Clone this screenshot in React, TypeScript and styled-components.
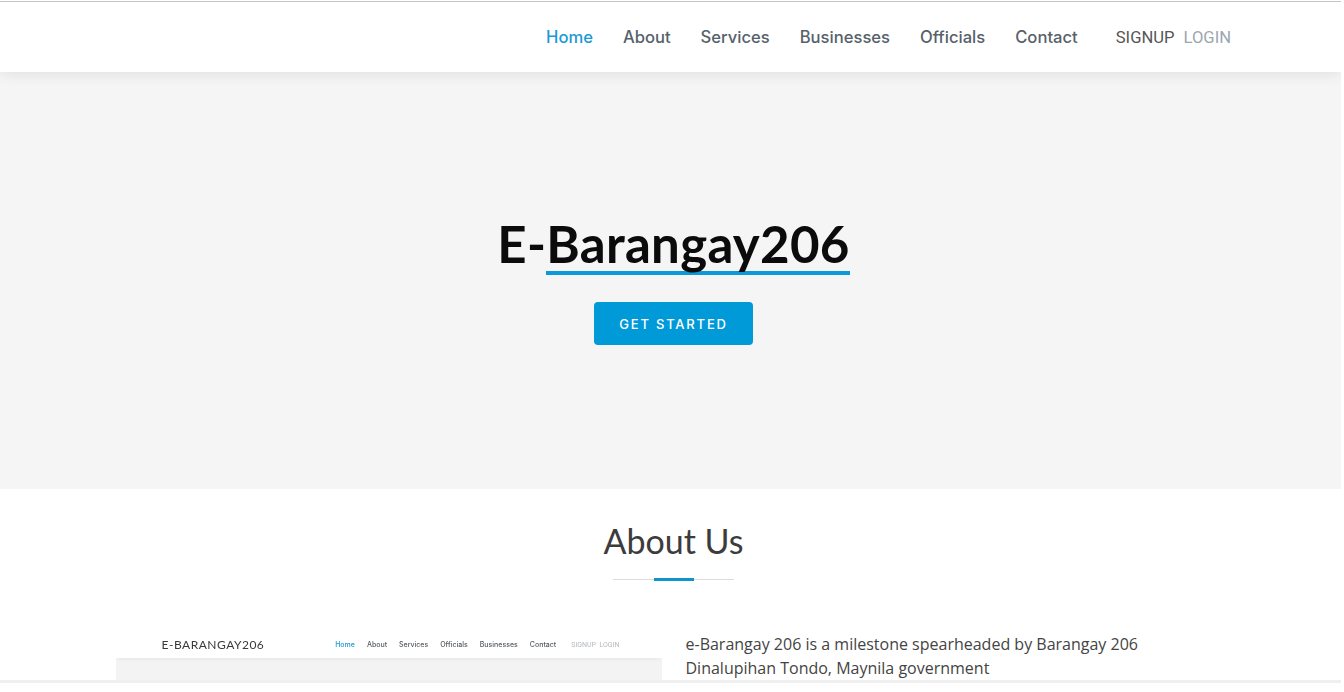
import styled, { createGlobalStyle } from 'styled-components';

const GlobalStyle = createGlobalStyle`
  html, body {
    margin: 0;
    padding: 0;
    background: #ffffff;
  }

  * {
    box-sizing: border-box;
  }
`;

const navItems = ['Home', 'About', 'Services', 'Businesses', 'Officials', 'Contact'];
const miniNavItems = ['Home', 'About', 'Services', 'Officials', 'Businesses', 'Contact'];

const Header = () => {
  return <HeaderBar>
    <Nav>
      {navItems.map((item, idx) => <NavLink key={item} $active={idx === 0}>{item}</NavLink>)}
    </Nav>
    <Auth>
      <AuthLink>SIGNUP</AuthLink>
      <AuthLink $muted>LOGIN</AuthLink>
    </Auth>
  </HeaderBar>;
};

const SitePreview = () => {
  return <Preview>
    <PreviewHead>
      <PreviewBrand>E-BARANGAY206</PreviewBrand>
      <PreviewNav>
        {miniNavItems.map((item, idx) => <PreviewLink key={item} $active={idx === 0}>{item}</PreviewLink>)}
        <PreviewAuth>SIGNUP&nbsp; LOGIN</PreviewAuth>
      </PreviewNav>
    </PreviewHead>
    <PreviewHero />
  </Preview>;
};

export default function App() {
  return <>
    <GlobalStyle />
    <Frame>
      <Viewport>
        <Header />
        <Hero>
          <Title>E-<Underlined>Barangay206</Underlined></Title>
          <StartButton>GET STARTED</StartButton>
        </Hero>
        <About>
          <SectionTitle>About Us</SectionTitle>
          <Divider>
            <DividerAccent />
          </Divider>
          <AboutRow>
            <SitePreview />
            <AboutText>
              e-Barangay 206 is a milestone spearheaded by Barangay 206 Dinalupihan Tondo, Maynila government
            </AboutText>
          </AboutRow>
        </About>
      </Viewport>
      <BottomEdge />
    </Frame>
  </>;
}

const Frame = styled.div`
  width: 1341px;
  margin-top: 1px;
  border-top: 1px solid #c4c4c4;
`;

const Viewport = styled.div`
  height: 678px;
  overflow: hidden;
`;

const BottomEdge = styled.div`
  height: 3px;
  background: #efefef;
`;

const HeaderBar = styled.header`
  position: relative;
  z-index: 2;
  height: 70px;
  padding-right: 110px;

  display: flex;
  align-items: center;
  justify-content: flex-end;

  background: #ffffff;
  box-shadow: 0 2px 14px rgba(0, 0, 0, 0.09);
`;

const Nav = styled.nav`
  display: flex;
  gap: 30px;
  margin-right: 38px;
`;

const NavLink = styled.a<{ $active?: boolean }>`
  font-family: Inter, "Noto Sans", sans-serif;
  font-size: 16.6px;
  font-weight: 500;
  color: ${p => p.$active ? '#1a9ad6' : '#56616a'};
  text-decoration: none;
`;

const Auth = styled.div`
  display: flex;
  gap: 9px;
`;

const AuthLink = styled.a<{ $muted?: boolean }>`
  font-family: Roboto, "Liberation Sans", sans-serif;
  font-size: 16.6px;
  color: ${p => p.$muted ? '#9ba6af' : '#565656'};
`;

const Hero = styled.section`
  height: 417px;
  padding-top: 145px;
  padding-left: 6px;

  display: flex;
  flex-direction: column;
  align-items: center;

  background: #f5f5f5;
`;

const Title = styled.h1`
  margin: 0;

  font-family: Lato, "Open Sans", sans-serif;
  font-size: 51px;
  font-weight: 700;
  line-height: 54px;
  letter-spacing: 0.3px;
  color: #0b0b0b;
`;

const Underlined = styled.span`
  display: inline-block;
  border-bottom: 4px solid #0d99d9;
`;

const StartButton = styled.button`
  margin-top: 27px;
  width: 159px;
  height: 43px;

  border: none;
  border-radius: 4px;
  background: #009ad9;

  font-family: Inter, "Open Sans", sans-serif;
  font-size: 13px;
  font-weight: 500;
  letter-spacing: 1.8px;
  color: #ffffff;
`;

const About = styled.section`
  padding-top: 31px;

  display: flex;
  flex-direction: column;
  align-items: center;

  background: #ffffff;
`;

const SectionTitle = styled.h2`
  margin: 0 0 0 6px;

  font-family: Lato, "Open Sans", sans-serif;
  font-size: 34px;
  font-weight: 400;
  line-height: 42px;
  color: #3c3c3c;
`;

const Divider = styled.div`
  margin: 16px 0 0 6px;
  width: 121px;
  height: 3px;

  display: flex;
  align-items: center;
  justify-content: center;

  background: linear-gradient(#dddddd, #dddddd) center / 100% 1px no-repeat;
`;

const DividerAccent = styled.span`
  width: 40px;
  height: 3px;
  background: #0e94cf;
`;

const AboutRow = styled.div`
  margin-top: 51px;
  width: 1110px;

  display: grid;
  grid-template-columns: 546px 1fr;
  column-gap: 24px;
  align-items: start;
`;

const AboutText = styled.p`
  margin: 0;

  font-family: "Open Sans", sans-serif;
  font-size: 16px;
  line-height: 24px;
  color: #444444;
`;

const Preview = styled.div`
  margin-top: 4px;
  filter: blur(0.3px);
`;

const PreviewHead = styled.div`
  position: relative;
  z-index: 1;
  height: 22px;
  padding: 0 42px 5px 46px;

  display: flex;
  align-items: center;
  justify-content: space-between;

  background: #ffffff;
  box-shadow: 0 3px 4px -2px rgba(0, 0, 0, 0.06);
`;

const PreviewBrand = styled.span`
  font-family: Lato, "Open Sans", sans-serif;
  font-size: 12px;
  font-weight: 400;
  letter-spacing: 0.5px;
  color: #3a3a3a;
`;

const PreviewNav = styled.div`
  display: flex;
  align-items: center;
  gap: 12px;
`;

const PreviewLink = styled.span<{ $active?: boolean }>`
  font-family: Inter, sans-serif;
  font-size: 7px;
  font-weight: 500;
  color: ${p => p.$active ? '#1a9ad6' : '#555b60'};
`;

const PreviewAuth = styled.span`
  margin-left: 3px;

  font-family: Roboto, sans-serif;
  font-size: 7px;
  color: #b4b9bd;
`;

const PreviewHero = styled.div`
  height: 60px;
  background: #f3f3f3;
`;
